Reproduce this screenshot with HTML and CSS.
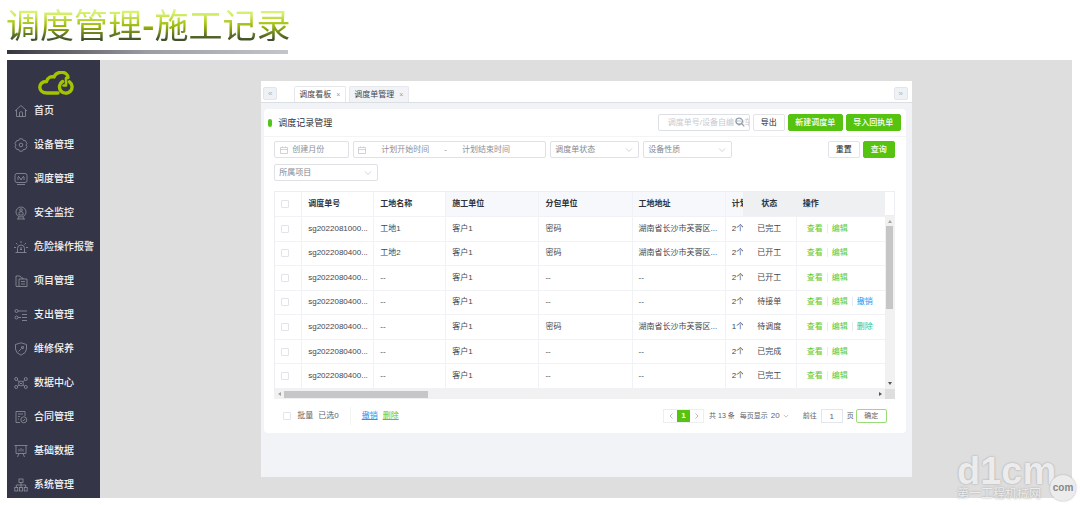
FILE: index.html
```html
<!DOCTYPE html>
<html lang="zh-CN">
<head>
<meta charset="utf-8">
<title>调度管理-施工记录</title>
<link rel="stylesheet" href="styles.css">
</head>
<body>
<header class="page-title">
  <h1>调度管理<b>-</b>施工记录</h1>
  <div class="title-rule"></div>
</header>
<div class="stage">
  <nav class="sidebar">
    <svg class="logo" viewBox="0 0 36 24" fill="none" stroke="#a3c400" stroke-width="3.4" stroke-linecap="round" stroke-linejoin="round">
      <path d="M20 22H9C-.5 22-.5 10.500 8.500 10.500C9.500 6.500 13 5 16 6C19-.5 29.500 0 30 6.500"/>
      <path d="M24.500 10.500A6.300 6.300 0 1 0 31.500 10.800"/>
      <path d="M28 7V14.500H25.500" stroke-width="2.600"/>
    </svg>
    <ul class="menu">
      <li><a href="#"><svg viewBox="0 0 14 14"><path d="M1 7L7 1.500L13 7M2.500 6V12.500H11.500V6M5.500 12.500V8.500Q7 6.500 8.500 8.500V12.500"/></svg>首页</a></li>
      <li><a href="#"><svg viewBox="0 0 14 14"><path d="M5.500.8H8.500L9.300 2.500L11.300 2.600L13 5.500L12 7L13 8.600L11.300 11.400L9.300 11.500L8.500 13.200H5.500L4.700 11.500L2.700 11.400L1 8.600L2 7L1 5.500L2.700 2.600L4.700 2.500Z"/><circle cx="7" cy="7" r="1.800"/></svg>设备管理</a></li>
      <li><a href="#"><svg viewBox="0 0 14 14"><rect x="1" y="1.500" width="12" height="9" rx="2"/><path d="M3 12.500H11M4 5V8M6 6L7 8L8 6M10 5V8M4 4L6 6M10 4L8 6"/></svg>调度管理</a></li>
      <li><a href="#"><svg viewBox="0 0 14 14"><circle cx="7" cy="6" r="5"/><circle cx="7" cy="4" r="1.300"/><path d="M5 9V6.500Q7 4.500 9 6.500V9ZM3 13H11M5 11L4 13M9 11L10 13"/></svg>安全监控</a></li>
      <li><a href="#"><svg viewBox="0 0 14 14"><path d="M3.500 12V8.500Q3.500 5 7 5Q10.500 5 10.500 8.500V12M1.500 12.500H12.500M7 1V3M2 3L3.500 4.500M12 3L10.500 4.500M0 7.500H2M12 7.500H14M7 7V10M6 9L7 10L8 9"/></svg>危险操作报警</a></li>
      <li><a href="#"><svg viewBox="0 0 14 14"><path d="M2 12V2H6L7.500 4H9V5M5 5H13V12.500H2M5 5V12.500M7 7.500H11M7 10H11"/></svg>项目管理</a></li>
      <li><a href="#"><svg viewBox="0 0 14 14"><circle cx="2.500" cy="3" r="1.500"/><circle cx="2.500" cy="9.500" r="1.500"/><path d="M4 3H13M4 9.500H7M8 6.500H13M8 9.500H13M8 12.500H13"/></svg>支出管理</a></li>
      <li><a href="#"><svg viewBox="0 0 14 14"><path d="M7 .8L12.500 2.500V7Q12.500 11 7 13.200Q1.500 11 1.500 7V2.500ZM4.500 9.500L7.500 6.500M7 5L9.500 4.500L9 7Z"/></svg>维修保养</a></li>
      <li><a href="#"><svg viewBox="0 0 14 14"><circle cx="2.200" cy="3" r="1.500"/><circle cx="11.800" cy="3" r="1.500"/><circle cx="2.200" cy="11" r="1.500"/><circle cx="11.800" cy="11" r="1.500"/><circle cx="7" cy="7.500" r="2.400"/><path d="M3.500 4L5.200 6M10.500 4L8.800 6M3.500 10L5 9M10.500 10L9 9M6 7.500H8"/></svg>数据中心</a></li>
      <li><a href="#"><svg viewBox="0 0 14 14"><path d="M6 12.500H2V1.500H11V6M4 4H9M4 6.500H6M4 9H5"/><circle cx="9.800" cy="9.800" r="3"/><path d="M8.500 9.800L9.500 10.800L11 9"/></svg>合同管理</a></li>
      <li><a href="#"><svg viewBox="0 0 14 14"><path d="M.5 1.500H13.500M2 1.500V9.500H12V1.500M5 5V7.500M7 4V7.500M9 5V7.500M5 9.500L3.500 13M9 9.500L10.500 13"/></svg>基础数据</a></li>
      <li><a href="#"><svg viewBox="0 0 14 14"><rect x="5" y="1" width="4" height="3.500"/><rect x=".8" y="9.500" width="3" height="3.500"/><rect x="5.500" y="9.500" width="3" height="3.500"/><rect x="10.200" y="9.500" width="3" height="3.500"/><path d="M7 4.500V9.500M2.300 9.500V7H11.700V9.500"/></svg>系统管理</a></li>
    </ul>
  </nav>
  <main class="canvas">
    <section class="panel">
      <div class="tabs">
        <button class="tab-nav" aria-label="上一页">«</button>
        <div class="tab-list">
          <button class="tab">调度看板<span>×</span></button>
          <button class="tab active">调度单管理<span>×</span></button>
        </div>
        <button class="tab-nav" aria-label="下一页">»</button>
      </div>
      <div class="card">
        <div class="card-head">
          <h2>调度记录管理</h2>
          <div class="search">
            <input type="text" aria-label="搜索" placeholder="调度单号/设备自编号/车牌">
            <svg viewBox="0 0 10 10"><circle cx="4.200" cy="4.200" r="3.200"/><path d="M6.600 6.600L9.300 9.300"/></svg>
          </div>
          <button class="btn">导出</button>
          <button class="btn primary wide">新建调度单</button>
          <button class="btn primary wide">导入回执单</button>
        </div>
        <div class="filters">
          <div class="fields">
            <label class="field month"><svg viewBox="0 0 8 8"><path d="M.5 1.500H7.500V7.500H.5ZM.5 3.500H7.500M2.500.5V2M5.500.5V2"/></svg><input type="text" aria-label="创建月份" placeholder="创建月份"></label>
            <div class="field range"><svg viewBox="0 0 8 8"><path d="M.5 1.500H7.500V7.500H.5ZM.5 3.500H7.500M2.500.5V2M5.500.5V2"/></svg><input type="text" aria-label="计划开始时间" placeholder="计划开始时间"><span>-</span><input type="text" aria-label="计划结束时间" placeholder="计划结束时间"></div>
            <div class="field pick"><select aria-label="调度单状态"><option>调度单状态</option></select><svg viewBox="0 0 8 8"><path d="M1 2.500L4 5.500L7 2.500"/></svg></div>
            <div class="field pick"><select aria-label="设备性质"><option>设备性质</option></select><svg viewBox="0 0 8 8"><path d="M1 2.500L4 5.500L7 2.500"/></svg></div>
            <div class="field pick project"><select aria-label="所属项目"><option>所属项目</option></select><svg viewBox="0 0 8 8"><path d="M1 2.500L4 5.500L7 2.500"/></svg></div>
          </div>
          <button class="btn">重置</button>
          <button class="btn primary">查询</button>
        </div>
        <div class="grid">
          <table>
            <colgroup><col class="c-check"><col class="c-no"><col class="c-no"><col class="c-unit"><col class="c-unit"><col class="c-unit"><col class="c-plan"><col class="c-state"><col class="c-act"></colgroup>
            <thead><tr><th><input type="checkbox" aria-label="全选"></th><th>调度单号</th><th>工地名称</th><th class="tint">施工单位</th><th class="tint">分包单位</th><th class="tint">工地地址</th><th class="tint plan">计划</th><th class="fixed state">状态</th><th class="fixed">操作</th></tr></thead>
            <tbody>
              <tr><td><input type="checkbox" aria-label="选择"></td><td>sg2022081000...</td><td>工地1</td><td>客户1</td><td>密码</td><td>湖南省长沙市芙蓉区...</td><td class="plan">2个</td><td class="state">已完工</td><td class="act"><a href="#">查看</a><a href="#">编辑</a></td></tr>
              <tr><td><input type="checkbox" aria-label="选择"></td><td>sg2022080400...</td><td>工地2</td><td>客户1</td><td>密码</td><td>湖南省长沙市芙蓉区...</td><td class="plan">2个</td><td class="state">已开工</td><td class="act"><a href="#">查看</a><a href="#">编辑</a></td></tr>
              <tr><td><input type="checkbox" aria-label="选择"></td><td>sg2022080400...</td><td>--</td><td>客户1</td><td>--</td><td>--</td><td class="plan">2个</td><td class="state">已开工</td><td class="act"><a href="#">查看</a><a href="#">编辑</a></td></tr>
              <tr><td><input type="checkbox" aria-label="选择"></td><td>sg2022080400...</td><td>--</td><td>客户1</td><td>--</td><td>--</td><td class="plan">2个</td><td class="state">待接单</td><td class="act"><a href="#">查看</a><a href="#">编辑</a><a href="#" class="blue">撤销</a></td></tr>
              <tr><td><input type="checkbox" aria-label="选择"></td><td>sg2022080400...</td><td>--</td><td>客户1</td><td>密码</td><td>湖南省长沙市芙蓉区...</td><td class="plan">1个</td><td class="state">待调度</td><td class="act"><a href="#">查看</a><a href="#">编辑</a><a href="#" class="teal">删除</a></td></tr>
              <tr><td><input type="checkbox" aria-label="选择"></td><td>sg2022080400...</td><td>--</td><td>客户1</td><td>--</td><td>--</td><td class="plan">2个</td><td class="state">已完成</td><td class="act"><a href="#">查看</a><a href="#">编辑</a></td></tr>
              <tr><td><input type="checkbox" aria-label="选择"></td><td>sg2022080400...</td><td>--</td><td>客户1</td><td>--</td><td>--</td><td class="plan">2个</td><td class="state">已完工</td><td class="act"><a href="#">查看</a><a href="#">编辑</a></td></tr>
            </tbody>
          </table>
          <div class="v-side"><div class="v-head"></div><div class="v-bar"><i class="up"></i><b></b><i class="down"></i></div></div>
          <div class="h-bar"><i class="left"></i><b></b><i class="right"></i></div>
          <div class="corner"></div>
        </div>
        <div class="foot">
          <label class="batch"><input type="checkbox">批量</label>
          <span class="chosen">已选0</span>
          <a href="#" class="blue">撤销</a>
          <a href="#">删除</a>
          <div class="pager">
            <div class="pages"><button aria-label="上一页"><svg viewBox="0 0 6 8"><path d="M4.500 1.500L2 4L4.500 6.500"/></svg></button><button class="on">1</button><button aria-label="下一页"><svg viewBox="0 0 6 8"><path d="M1.500 1.500L4 4L1.500 6.500"/></svg></button></div>
            <span>共 13 条</span>
            <label class="size">每页显示<select><option>20</option></select><svg viewBox="0 0 8 8"><path d="M1 2.500L4 5.500L7 2.500"/></svg></label>
            <label class="jump">前往<input type="text" value="1">页</label>
            <button class="ok">确定</button>
          </div>
        </div>
      </div>
    </section>
  </main>
  <div class="watermark"><strong>d1cm</strong><span>第一工程机械网</span><em>com</em></div>
</div>
</body>
</html>
```
FILE: styles.css
```css
* { box-sizing: border-box; }
body {
  margin: 0;
  padding: 7px 8px 7px 7px;
  background: #fff;
  color: #45474d;
  font: 8px/12px "Liberation Sans", "Noto Sans CJK SC", sans-serif;
}
a { color: #5cc82c; text-decoration: none; }
a.blue { color: #2196f3; }
a.teal { color: #35c48a; }
button, input, select { font: inherit; color: inherit; margin: 0; padding: 0; outline: 0; }
button { cursor: pointer; }
svg { fill: none; flex: none; }

.page-title { width: 281px; }
.page-title h1 {
  margin: 0 0 0 -1px;
  font: 400 34px/34px "Noto Sans CJK SC", sans-serif;
  white-space: nowrap;
  background: linear-gradient(#dff58a 8%, #cdea5c 25%, #9dbb0c 55%, #40502f 96%);
  -webkit-background-clip: text;
  background-clip: text;
  color: transparent;
  width: max-content;
}
.title-rule {
  height: 4px;
  margin: 9px 0 6px;
  background: linear-gradient(90deg, #35353f, #9b9da3 50%, #c4c5ca);
}

.stage { display: flex; position: relative; background: #dedede; }
.sidebar { flex: none; width: 93px; padding: 11px 0 4px; background: #343546; }
.logo { display: block; width: 36px; height: 24px; margin: 0 0 7px 31px; }
.menu { display: flex; flex-direction: column; gap: 16px; margin: 0; padding: 0; list-style: none; }
.menu a {
  display: flex; align-items: center; gap: 6px; height: 18px; padding-left: 7px;
  color: #f4f4f7; font-size: 10px; font-weight: 500; white-space: nowrap;
}
.menu svg { width: 14px; height: 14px; stroke: #92939f; stroke-width: 0.8; }

.canvas { flex: 1; padding: 21px 0 21px 1px; display: flex; justify-content: center; }
.panel { width: 67%; background: #f2f3f7; }
.tabs { display: flex; align-items: flex-end; height: 22px; padding: 0 4px 0 2px; background: #fff; border-bottom: 1px solid #dcdfe2; }
.tab-nav { width: 14px; height: 13px; margin-bottom: 2px; border: 1px solid #e2e6ec; border-radius: 2px; background: #eef1f6; color: #a9b4c2; line-height: 10px; }
.tab-list { flex: 1; display: flex; gap: 3px; padding-left: 17px; }
.tab { height: 16px; padding: 0 5px 0 4px; border: 1px solid #e6e8ec; border-bottom: 0; border-radius: 2px 2px 0 0; background: #fff; white-space: nowrap; }
.tab span { margin-left: 5px; color: #9a9ca2; font-size: 7px; }
.tab.active { background: #f2f3f7; }

.card { margin: 6px 6px 43px 3px; background: #fff; border-radius: 4px; }
.card-head { display: flex; align-items: center; gap: 3px; height: 28px; padding: 0 5px 0 4px; border-bottom: 1px solid #f3f4f6; }
h2 { flex: 1; display: flex; align-items: center; gap: 6px; margin: 0; font-size: 9px; font-weight: 400; color: #303238; }
h2::before { content: ""; width: 4px; height: 8px; border-radius: 2px; background: #52c41a; }
.search { position: relative; width: 92px; height: 17px; }
.search input { width: 100%; height: 17px; padding: 0 0 0 9px; border: 1px solid #dcdfe4; border-radius: 2px; background: #fff; }
.search svg { position: absolute; right: 5px; top: 3px; width: 10px; height: 10px; stroke: #8f9aa6; stroke-width: 1.2; }
.search input::placeholder { color: #c6c9cf; }
.btn { width: 32px; height: 17px; border: 1px solid #e2e4e9; border-radius: 2px; background: #fff; color: #222; white-space: nowrap; line-height: 12px; }
.btn.primary { border-color: #55c30f; background: #55c30f; color: #fff; font-weight: 500; }
.btn.wide { width: 55px; }

.filters { display: flex; align-items: flex-start; gap: 3px; padding: 4px 11px 10px 10px; }
.fields { flex: 1; display: flex; flex-wrap: wrap; gap: 6px 4px; }
.field { display: flex; align-items: center; height: 17px; border: 1px solid #dfe1e6; border-radius: 2px; color: #85888f; position: relative; }
.field svg { width: 8px; height: 8px; stroke: #c3c8d2; stroke-width: 0.8; }
.field input { flex: 1; min-width: 0; border: 0; background: none; }
.field input::placeholder { color: #8d9097; opacity: 1; }
.month { width: 75px; padding-left: 5px; gap: 4px; }
.range { width: 193px; padding-left: 4px; }
.range input { flex: none; width: 78px; text-align: center; }
.range span { flex: none; }
.pick { width: 89px; }
.pick select { appearance: none; width: 100%; height: 15px; padding-left: 4px; border: 0; background: none; }
.pick svg { position: absolute; right: 5px; top: 4px; }
.project { width: 104px; }

.grid { display: grid; grid-template-columns: 1fr 10px; margin: 0 11px 0 10px; }
table { width: 100%; height: 198px; table-layout: fixed; border-collapse: separate; border-spacing: 0; border-left: 1px solid #eceef3; border-top: 1px solid #eceef3; }
.c-check { width: 27px; }
.c-no { width: 72px; }
.c-plan { width: 17px; }
.c-state { width: 54px; }
.c-act { width: 88px; }
th, td { padding: 0 0 0 6px; text-align: left; white-space: nowrap; overflow: hidden; border-right: 1px solid #f1f2f5; border-bottom: 1px solid #f1f2f5; }
th { height: 25px; font-weight: 600; color: #303238; }
th.tint { background: #f7f8fb; }
th.fixed { background: #eff0f2; border-right-color: #eff0f2; }
.plan { border-right: 0; }
td.state, th.state { padding: 0; text-align: center; }
input[type="checkbox"] { appearance: none; display: block; width: 8px; height: 8px; border: 1px solid #e1e4ea; border-radius: 1px; background: #fff; }
td.act { padding-left: 10px; border-right: 0; }
.act a + a { margin-left: 4px; padding-left: 4px; border-left: 1px solid #e9ebef; }

.v-side { display: flex; flex-direction: column; }
.v-head { height: 25px; border: 1px solid #eceef3; border-left: 0; }
.v-bar { flex: 1; display: flex; flex-direction: column; align-items: center; justify-content: space-between; padding: 4px 0; background: #f1f1f1; }
.v-bar b { width: 7px; height: 83px; margin: 3px 0 auto; background: #c6c6c6; }
.h-bar { display: flex; align-items: center; height: 10px; padding: 0 3px 0 4px; background: #f1f1f1; }
.h-bar b { width: 144px; height: 7px; margin: 0 auto 0 3px; background: #c6c6c6; }
.corner { background: #dedede; }
.grid i { border: 2px solid transparent; }
.grid .up { border-top: 0; border-bottom: 3px solid #a4a4a4; }
.grid .down { border-bottom: 0; border-top: 3px solid #555; }
.grid .left { border-left: 0; border-right: 3px solid #a4a4a4; }
.grid .right { border-right: 0; border-left: 3px solid #555; }

.foot { display: flex; align-items: center; height: 34px; padding: 0 19px; color: #606369; white-space: nowrap; }
.batch { display: flex; align-items: center; gap: 6px; }
.chosen { height: 18px; margin: 0 11px 0 5px; padding-right: 11px; border-right: 1px solid #f3f4f6; line-height: 18px; }
.foot > a { margin-right: 5px; text-decoration: underline; }
.pager { flex: 1; display: flex; align-items: center; justify-content: flex-end; font-size: 7px; }
.pages { display: flex; height: 14px; margin-right: 5px; border: 1px solid #eceef2; }
.pages button { display: flex; align-items: center; justify-content: center; width: 13px; border: 0; background: #fff; }
.pages svg { width: 6px; height: 8px; stroke: #a9adb5; stroke-width: 0.8; }
.pages .on { background: #55c30f; color: #fff; font-size: 8px; font-weight: 700; }
.size { display: flex; align-items: center; gap: 3px; margin: 0 14px 0 5px; }
.size select { appearance: none; border: 0; background: none; width: 9px; font-size: 8px; }
.size svg { width: 6px; height: 6px; stroke: #a9adb5; }
.jump { display: flex; align-items: center; gap: 4px; }
.jump input { width: 22px; height: 14px; border: 1px solid #e4e6eb; text-align: center; font-size: 8px; }
.ok { width: 31px; height: 14px; margin-left: 2px; border: 1px solid #9bdc78; border-radius: 2px; background: #fff; }

.watermark { position: absolute; right: -5px; bottom: -3px; width: 120px; height: 46px; color: #ececec; text-shadow: 0 0 2px #999; white-space: nowrap; }
.watermark strong { position: absolute; left: 0; top: 0; font-size: 38px; line-height: 32px; }
.watermark span { position: absolute; left: 0; bottom: 0; font-size: 12px; line-height: 14px; }
.watermark em { position: absolute; right: 1px; bottom: 0; width: 26px; height: 26px; border-radius: 50%; background: #ececec; box-shadow: 0 0 2px #aaa; color: #888; font: 700 10px/25px "Liberation Sans", sans-serif; text-align: center; text-shadow: none; }
```
